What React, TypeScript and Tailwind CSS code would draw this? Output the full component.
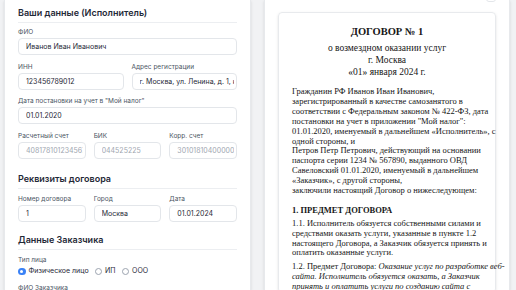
import React from "react";

const inputCls =
  "w-full h-[17px] pl-[7px] pr-[2px] border border-[#e3e6ea] rounded-[4px] bg-white text-[7px] text-[#1f2937] outline-none";
const mutedInputCls =
  "w-full h-[17px] pl-[7px] pr-[2px] border border-[#e3e6ea] rounded-[4px] bg-white text-[7px] text-[#a0a6b0] outline-none";

function Field({ label, value, muted }: { label: string; value: string; muted?: boolean }) {
  return (
    <div className="flex flex-col min-w-0">
      <label className="text-[6.5px] leading-[8px] text-[#4b5563] mb-[2px] whitespace-nowrap">{label}</label>
      <input readOnly defaultValue={value} className={muted ? mutedInputCls : inputCls} />
    </div>
  );
}

function SectionTitle({ children, className = "" }: { children: React.ReactNode; className?: string }) {
  return (
    <h2
      className={
        "text-[9px] leading-[14px] font-semibold text-[#1f2937] pb-[2px] border-b border-[#eceef1] " + className
      }
    >
      {children}
    </h2>
  );
}

function Radio({ label, checked }: { label: string; checked?: boolean }) {
  return (
    <label className="flex items-center gap-[3px]">
      {checked ? (
        <span className="w-[7.5px] h-[7.5px] rounded-full bg-[#3b82f6] flex items-center justify-center">
          <span className="w-[3px] h-[3px] rounded-full bg-white" />
        </span>
      ) : (
        <span className="w-[7.5px] h-[7.5px] rounded-full border border-[#9ca3af] bg-white" />
      )}
      <span className="text-[7px] text-[#1f2937]">{label}</span>
    </label>
  );
}

function Lines({ lines, className = "" }: { lines: React.ReactNode[]; className?: string }) {
  return (
    <div className={className}>
      {lines.map((l, i) => (
        <div key={i} className="whitespace-nowrap">
          {l}
        </div>
      ))}
    </div>
  );
}

export default function App() {
  return (
    <div
      className="h-[290px] w-[516px] overflow-hidden bg-[#f1f2f4] flex gap-[13px] pl-[4px]"
      style={{ fontFamily: "Inter, 'Noto Sans', sans-serif" }}
    >
      {/* left: form */}
      <div className="w-[247px] shrink-0 bg-white border-x border-[#e7e9ec] shadow-sm px-[13px] pt-[6px]">
        <SectionTitle>Ваши данные (Исполнитель)</SectionTitle>
        <div className="flex flex-col gap-[7.5px] mt-[5px]">
          <Field label="ФИО" value="Иванов Иван Иванович" />
          <div className="grid grid-cols-2 gap-[8px]">
            <Field label="ИНН" value="123456789012" />
            <Field label="Адрес регистрации" value="г. Москва, ул. Ленина, д. 1, кв. 1" />
          </div>
          <Field label='Дата постановки на учет в "Мой налог"' value="01.01.2020" />
          <div className="grid grid-cols-3 gap-[8px]">
            <Field label="Расчетный счет" value="40817810123456789012" muted />
            <Field label="БИК" value="044525225" muted />
            <Field label="Корр. счет" value="30101810400000000225" muted />
          </div>
        </div>

        <SectionTitle className="mt-[13px]">Реквизиты договора</SectionTitle>
        <div className="grid grid-cols-3 gap-[8px] mt-[6px]">
          <Field label="Номер договора" value="1" />
          <Field label="Город" value="Москва" />
          <Field label="Дата" value="01.01.2024" />
        </div>

        <SectionTitle className="mt-[11px]">Данные Заказчика</SectionTitle>
        <div className="mt-[6px] text-[6.5px] leading-[8px] text-[#4b5563]">Тип лица</div>
        <div className="flex items-center gap-[6px] mt-[3px] h-[10px]">
          <Radio label="Физическое лицо" checked />
          <Radio label="ИП" />
          <Radio label="ООО" />
        </div>
        <div className="mt-[7px] text-[6.5px] leading-[8px] text-[#4b5563]">ФИО Заказчика</div>
      </div>

      {/* right: preview */}
      <div className="w-[246px] shrink-0 bg-white border-x border-[#e7e9ec] shadow-sm px-[13px]">
        <div className="flex justify-end h-[12px]">
          <div className="-mt-[14px] h-[16px] w-[10px] rounded-[3px] border border-[#e3e6ea] bg-white" />
        </div>
        <div
          className="border border-[#e8eaed] rounded-[4px] shadow-sm px-[13px] pt-[12px] text-[#161616]"
          style={{ fontFamily: "'Liberation Serif', 'Times New Roman', serif" }}
        >
          <div className="text-center">
            <div className="text-[10.5px] leading-[14px] font-bold">ДОГОВОР № 1</div>
            <div className="text-[9.5px] leading-[12px] mt-[3px]">
              о возмездном оказании услуг
              <br />
              г. Москва
              <br />
              «01» января 2024 г.
            </div>
          </div>

          <Lines
            className="text-[8.5px] leading-[9.9px] mt-[9px]"
            lines={[
              "Гражданин РФ Иванов Иван Иванович,",
              "зарегистрированный в качестве самозанятого в",
              "соответствии с Федеральным законом № 422-ФЗ, дата",
              'постановки на учет в приложении "Мой налог":',
              "01.01.2020, именуемый в дальнейшем «Исполнитель», с",
              "одной стороны, и",
              "Петров Петр Петрович, действующий на основании",
              "паспорта серии 1234 № 567890, выданного ОВД",
              "Савеловский 01.01.2020, именуемый в дальнейшем",
              "«Заказчик», с другой стороны,",
              "заключили настоящий Договор о нижеследующем:",
            ]}
          />

          <h3 className="text-[8.5px] leading-[10px] font-bold mt-[9px]">1. ПРЕДМЕТ ДОГОВОРА</h3>
          <Lines
            className="text-[8.5px] leading-[9.8px] mt-[4px]"
            lines={[
              "1.1. Исполнитель обязуется собственными силами и",
              "средствами оказать услуги, указанные в пункте 1.2",
              "настоящего Договора, а Заказчик обязуется принять и",
              "оплатить оказанные услуги.",
            ]}
          />
          <Lines
            className="text-[8.5px] leading-[9.8px] mt-[4px]"
            lines={[
              <>
                1.2. Предмет Договора: <em>Оказание услуг по разработке веб-</em>
              </>,
              <em>сайта. Исполнитель обязуется оказать, а Заказчик</em>,
              <em>принять и оплатить услуги по созданию сайта с</em>,
            ]}
          />
        </div>
      </div>
    </div>
  );
}
